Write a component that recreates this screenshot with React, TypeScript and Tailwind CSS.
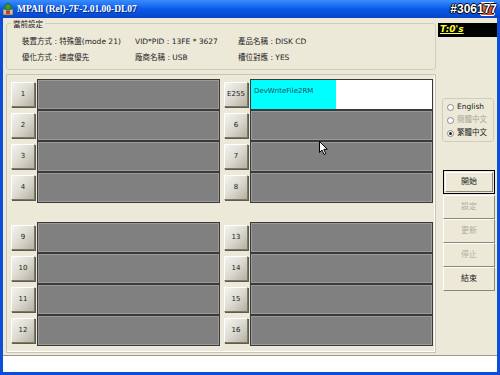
import React from "react";

const FONT = { fontFamily: '"DejaVu Sans", "Noto Sans CJK TC", sans-serif' };

const BTN =
  "flex items-center justify-center border border-t-white border-l-white border-r-[#7a7868] border-b-[#7a7868] bg-gradient-to-br from-[#f4f3ee] via-[#dcdad0] to-[#b4b1a2] text-[7px] text-[#222] shadow-[1px_1px_0_#5e5c50]";

const Slot = ({ label, fill, text }: { label: string; fill?: number; text?: string }) => (
  <div className="flex h-[31px] items-center">
    <div className={`${BTN} h-[25px] w-[24px]`}>{label}</div>
    <div className="ml-[2px] h-[31px] w-[183px] border border-[#3a3a3a] bg-[#808080] shadow-[inset_0_0_0_1px_#9a9a9a]">
      {fill !== undefined && (
        <div className="relative h-full w-full bg-white">
          <div className="absolute inset-y-0 left-0 bg-[#00ffff]" style={{ width: `${fill}%` }} />
          <span className="relative block px-[3px] pt-[6px] text-[7px] text-[#1e4a60]">{text}</span>
        </div>
      )}
    </div>
  </div>
);

const Group = ({ left, right }: { left: string[]; right: string[] }) => (
  <div className="flex">
    <div className="flex flex-col">
      {left.map((l) => (
        <Slot key={l} label={l} />
      ))}
    </div>
    <div className="ml-[4px] flex flex-col">
      {right.map((l) =>
        l === "E255" ? <Slot key={l} label={l} fill={47} text="DevWriteFile2RM" /> : <Slot key={l} label={l} />
      )}
    </div>
  </div>
);

const SideBtn = ({ label, disabled, def }: { label: string; disabled?: boolean; def?: boolean }) => (
  <div
    className={`flex h-[24px] w-[52px] items-center justify-center text-[8px] ${
      def ? "border border-black" : "border border-t-white border-l-white border-r-[#8a8878] border-b-[#8a8878]"
    } ${disabled ? "text-[#b0ad9e]" : "text-[#222]"} bg-[#ece9d8]`}
  >
    {def ? (
      <div className="flex h-[20px] w-[48px] items-center justify-center border border-t-white border-l-white border-r-[#8a8878] border-b-[#8a8878]">
        {label}
      </div>
    ) : (
      label
    )}
  </div>
);

const Radio = ({ label, checked, disabled }: { label: string; checked?: boolean; disabled?: boolean }) => (
  <div className={`flex h-[13px] items-center gap-[3px] text-[7.5px] ${disabled ? "text-[#aaa79a]" : "text-[#222]"}`}>
    <span className="flex h-[7px] w-[7px] items-center justify-center rounded-full border border-[#888] bg-white">
      {checked && <span className="h-[3px] w-[3px] rounded-full bg-[#222]" />}
    </span>
    {label}
  </div>
);

export default function App() {
  return (
    <div className="relative flex h-[375px] w-[500px] flex-col overflow-hidden bg-[#0b4fd8]" style={FONT}>
      {/* title bar */}
      <div className="relative flex h-[18px] shrink-0 items-center bg-gradient-to-b from-[#3a8dff] via-[#0a5ae8] to-[#0646c8] pl-[2px]">
        <svg width="12" height="13" viewBox="0 0 12 13">
          <rect x="1" y="6" width="10" height="6" fill="#c9c2a8" stroke="#5a5040" strokeWidth="0.8" />
          <circle cx="6" cy="4" r="3.4" fill="#3f9a3a" stroke="#1e5a1e" strokeWidth="0.8" />
          <rect x="4" y="8" width="4" height="3" fill="#d23a2a" />
        </svg>
        <span
          className="ml-[3px] text-[8.5px] font-bold text-white [text-shadow:1px_1px_0_#0a2a80]"
          style={{ fontFamily: '"Liberation Serif", serif', fontSize: "9.5px" }}
        >
          MPAll (Rel)-7F-2.01.00-DL07
        </span>
        <div className="absolute right-[5px] top-[2px] h-[14px] w-[15px] rounded-[2px] border border-white bg-gradient-to-br from-[#e88a6a] to-[#c2331a]" />
        <span
          className="absolute right-[3px] top-[0px] text-[12px] font-bold leading-[18px] text-white [text-shadow:1px_0_0_#000,-1px_0_0_#000,0_1px_0_#000,0_-1px_0_#000]"
          style={{ fontFamily: '"Liberation Sans", sans-serif' }}
        >
          #306177
        </span>
      </div>

      {/* body */}
      <div className="mx-[3px] flex flex-1 flex-col bg-[#ece9d8]">
        <div className="flex flex-1">
          <div className="flex w-[434px] flex-col pl-[3px] pt-[5px]">
            {/* settings group */}
            <div className="relative h-[47px] w-[430px] rounded-[3px] border border-[#d0cdbd] text-[7.5px] text-[#222]">
              <span className="absolute left-[4px] top-[-5px] bg-[#ece9d8] px-[2px]">當前設定</span>
              <div className="grid grid-cols-[113px_103px_1fr] gap-y-[6px] pl-[15px] pt-[13px] leading-[10px]">
                <span>裝置方式 : 特殊盤(mode 21)</span>
                <span>VID*PID : 13FE * 3627</span>
                <span>產品名稱 : DISK CD</span>
                <span>優化方式 : 速度優先</span>
                <span>廠商名稱 : USB</span>
                <span>槽位對應 : YES</span>
              </div>
            </div>

            {/* slots panel */}
            <div className="relative mt-[4px] flex h-[279px] w-[430px] flex-col border border-[#c8c5b5] pl-[4px] pt-[4px] shadow-[inset_-1px_-1px_0_#fff]">
              <Group left={["1", "2", "3", "4"]} right={["E255", "6", "7", "8"]} />
              <div className="h-[19px]" />
              <Group left={["9", "10", "11", "12"]} right={["13", "14", "15", "16"]} />
            </div>
          </div>

          {/* right column */}
          <div className="flex flex-1 flex-col pt-[5px]">
            <div className="ml-[1px] flex h-[14px] items-center bg-black pl-[2px] text-[9px] font-bold italic text-[#ffff33] underline">
              T:0's
            </div>
            <div className="ml-[5px] mt-[61px] flex h-[44px] w-[52px] flex-col justify-center rounded-[3px] border border-[#d0cdbd] pl-[4px]">
              <Radio label="English" />
              <Radio label="簡體中文" disabled />
              <Radio label="繁體中文" checked />
            </div>
            <div className="ml-[6px] mt-[28px] flex flex-col">
              <div className="h-[25px]">
                <SideBtn label="開始" def />
              </div>
              <SideBtn label="設定" disabled />
              <SideBtn label="更新" disabled />
              <SideBtn label="停止" disabled />
              <SideBtn label="結束" />
            </div>
          </div>
        </div>
        <div className="mt-[2px] h-[17px] shrink-0 border-t border-[#9a988a] bg-white" />
      </div>
      <div className="h-[3px] shrink-0" />

      {/* mouse cursor */}
      <svg className="absolute left-[319px] top-[141px]" width="10" height="15" viewBox="0 0 10 15">
        <path d="M0.5 0.5 L0.5 11.5 L3 9 L5 13.5 L6.8 12.7 L4.8 8.3 L8.3 8.3 Z" fill="#fff" stroke="#000" strokeWidth="1" />
      </svg>
    </div>
  );
}
